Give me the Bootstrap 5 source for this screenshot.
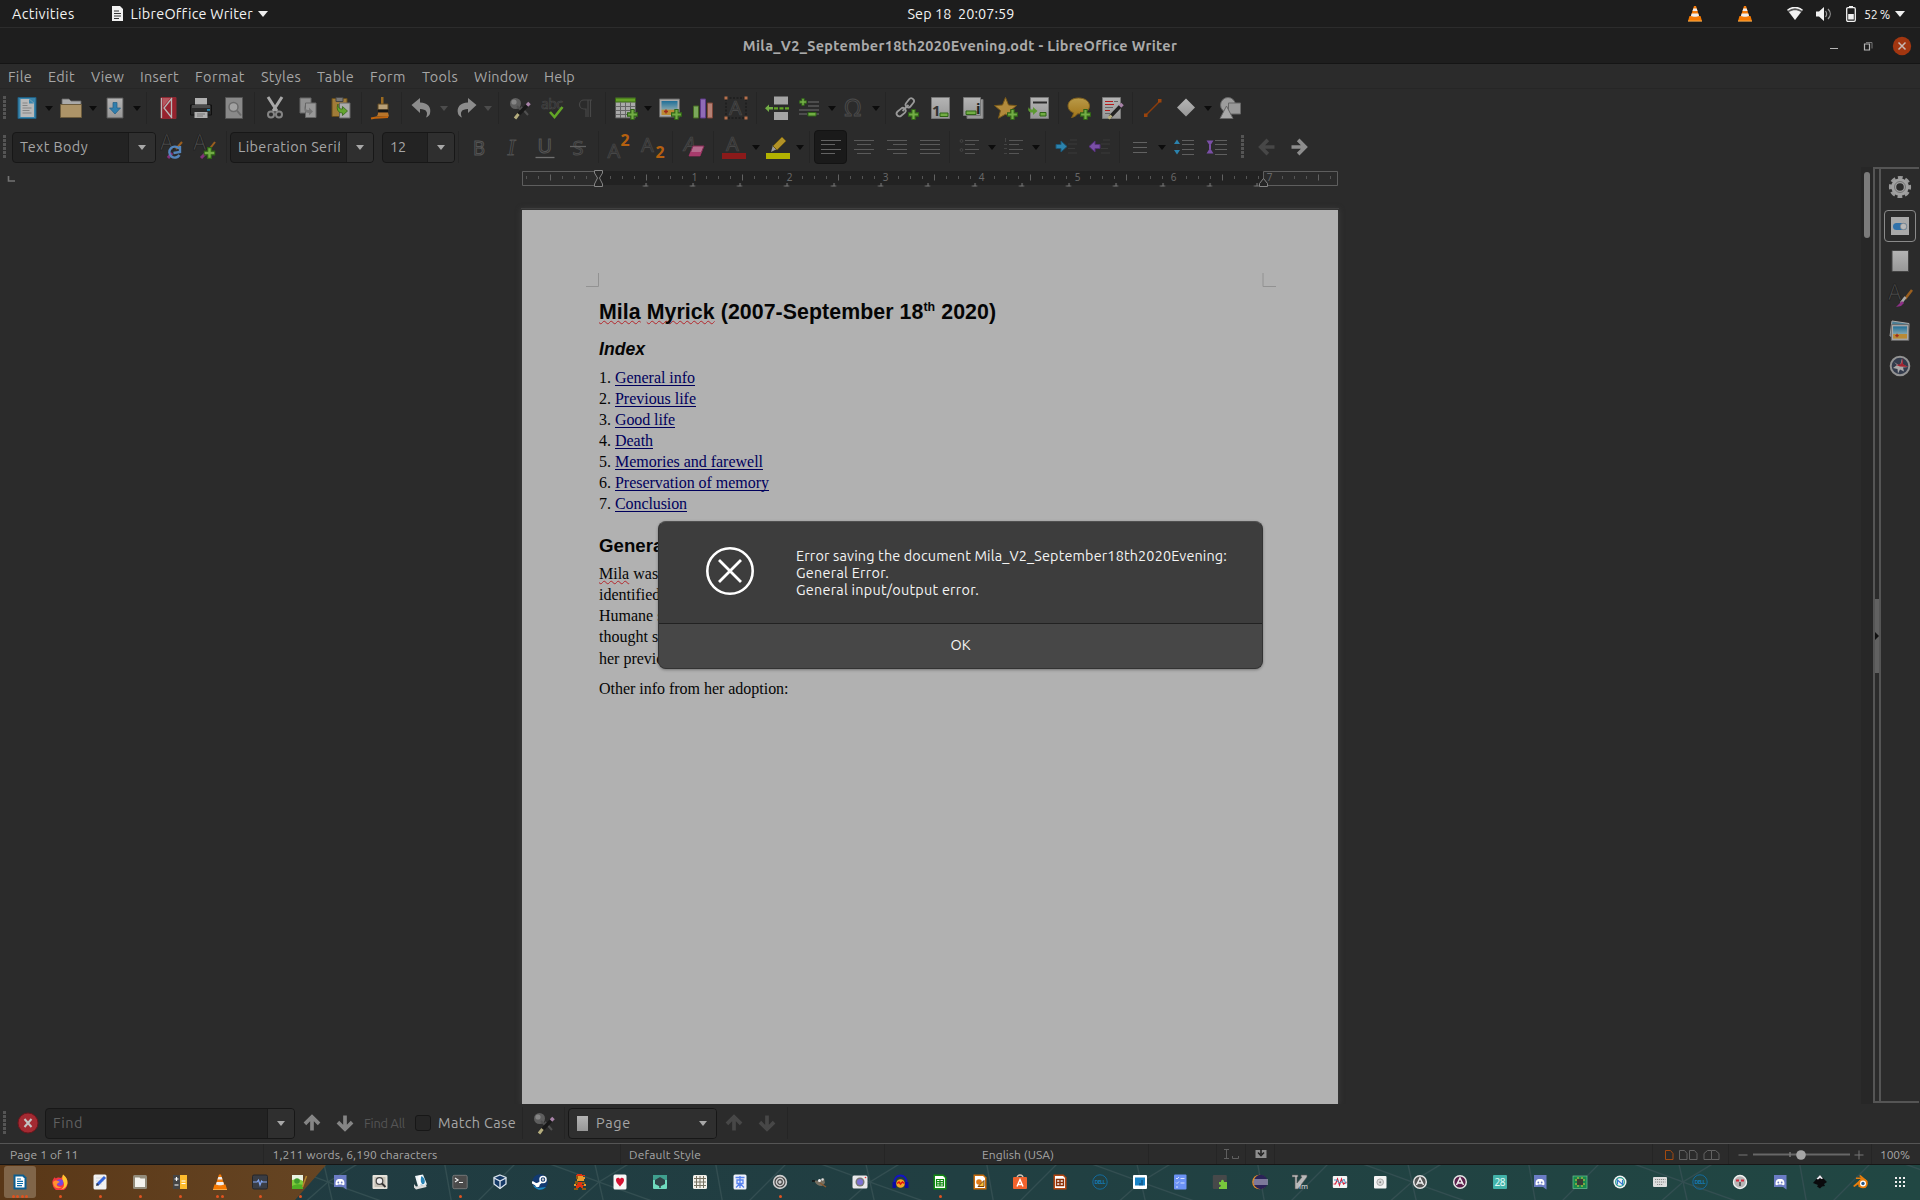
<!DOCTYPE html>
<html lang="en">
<head>
<meta charset="utf-8">
<title>Mila_V2_September18th2020Evening.odt - LibreOffice Writer</title>
<link href="https://cdn.jsdelivr.net/npm/bootstrap@5.3.0/dist/css/bootstrap.min.css" rel="stylesheet">
<style>
body{width:1920px;height:1200px;overflow:hidden;background:#2b2b2b;color:#a6a6a6;font:14.4px/18px Ubuntu,"Noto Sans",sans-serif}
svg{display:block;flex:none}
.fit{display:inline-block;white-space:pre}
.topbar{height:28px;background:#1d1d1d;color:#f2f2f2;border-bottom:1px solid #2c2c2c}
.titlebar{height:36px;background:#1e1e1e;border-bottom:1px solid #151515;color:#aaa;font-weight:700}
.menus{height:25px;border-bottom:1px solid #262626;gap:16px;padding:1px 0 0 8px}
.bar1{height:38px}.bar2{height:40px}
.tb,.ar,.sp{flex:none;display:flex;align-items:center;justify-content:center}
.tb{width:33px;height:34px}
.ar{width:11px}.ar::after,.tri::after{content:"";border:4.5px solid transparent;border-top:5px solid #0c0c0c;border-bottom:0}
.ar.off::after{border-top-color:#4c4c4c}
.tri::after{border-top-color:#a8a8a8}
.sp{width:8px;height:32px}.sp::after{content:"";width:1px;height:32px;background:#252525}
.w7{width:7px}.w9{width:9px}.w10{width:10px}
.grip{flex:none;width:3px;height:24px;background:repeating-linear-gradient(#555 0 3px,transparent 3px 4px)}
.combo{flex:none;height:31px;border:1px solid #171717;border-radius:4px;background:#232323;overflow:hidden}
.combo .txt{flex:1;padding-left:7px;overflow:hidden;white-space:nowrap}
.combo .tri{width:27px;height:100%;background:#2f2f2f;border-left:1px solid #1b1b1b}
.on{background:#1a1a1a;border:1px solid #131313;border-radius:4px}
.main{height:937px}
.canvas{width:1861px;overflow:hidden}
.rulerrow{height:43px}
.paper{width:816px;height:894px;margin-left:522px;background:#b1b1b1;color:#050505;box-shadow:0 0 5px 1px #3c3c3c;font:16px/21.16px "Liberation Serif",serif;padding:63px 0 0 64px}
.marks{width:692px;height:14px}
.txtarea{margin-left:13px}
.paper h1,.paper h2,.paper h3{font-family:"Liberation Sans",sans-serif;font-weight:700;white-space:nowrap}
.paper h1{font-size:21.33px;line-height:24px;margin:13px 0 14px;letter-spacing:.065px}
.paper h1 sup{font-size:12.4px;top:-.62em}
.paper h2{font-size:17.6px;line-height:22px;font-style:italic;margin:0 0 6.500px}
.paper h3{font-size:18.67px;line-height:22px;margin:20.400px 0 6px}
.paper a{color:#00005c;text-decoration:none}
.paper a .fit{text-decoration:underline;text-decoration-thickness:1px;text-underline-offset:2px;text-decoration-skip-ink:none}
.wavy{text-decoration:underline wavy #b3262b 1px;text-underline-offset:1px;text-decoration-skip-ink:none}
.vtrack{width:12px;background:#272727;padding:5px 3px}
.vthumb{width:6px;height:66px;border-radius:3px;background:#7b7b7b}
.side{width:46px;height:936px;border:2px solid #555;border-right:0}
.rail{width:6px;border-right:2px solid #555;padding-top:430px}
.rail div{width:4px;height:74px;background:#616161}
.deck{width:38px}
.deck .tb{height:35px}
.deck .on2{border:1px solid #8a8a8a;border-radius:4px;width:32px;height:32px;margin:6px 0 1px}
.findbar{height:39px;padding-bottom:1px}
.statusbar{height:22px;border-top:1px solid #555;border-bottom:1px solid #161616;font-size:12px;line-height:21px}
.cell{flex:none;height:20px;border-right:1px solid #252525;padding-left:10px;white-space:nowrap}
.dock{height:35px;background:#21403f;position:relative}
.dockbg{position:absolute;inset:0}
.dk{position:relative;width:40px;height:35px;padding-top:9px}
.dk.act::before{content:"";position:absolute;left:4px;top:1px;width:32px;height:32px;border-radius:3px;background:#806549}
.dk svg{position:relative}
.dots{position:absolute;left:0;right:0;top:30px;gap:1.3px}
.dots i{width:3px;height:3px;border-radius:50%;background:#e0521f}
.msg{position:absolute;left:658px;top:521px;width:605px;height:148px;background:#3d3d3d;border:1px solid #333;border-top-color:#505050;border-radius:8px;color:#f4f4f4;font-size:14.4px;line-height:17px;box-shadow:0 1px 3px #0005;overflow:hidden}
.msg .bodyrow{height:101px;padding-left:47px}
.msg .lines{margin:26px 0 0 42px}
.msg .okbtn{height:46px;border:0;border-top:1px solid #222;border-radius:0;background:#474747;color:#f4f4f4;font-size:14.4px}
</style>
<script src="https://cdn.jsdelivr.net/npm/bootstrap@5.3.0/dist/js/bootstrap.bundle.min.js"></script>
</head>
<body class="d-flex flex-column">

<svg width="0" height="0" class="position-absolute">
<defs>
<linearGradient id="gp" x2="0" y2="1"><stop stop-color="#b4b4b4"/><stop offset="1" stop-color="#979797"/></linearGradient>
<linearGradient id="gold" x2="0" y2="1"><stop stop-color="#b99a48"/><stop offset="1" stop-color="#a17418"/></linearGradient>
<linearGradient id="gs" x2="0" y2="1"><stop stop-color="#206f98"/><stop offset=".6" stop-color="#7fa3ad"/><stop offset=".62" stop-color="#b98a35"/></linearGradient>
<symbol id="plus" viewBox="0 0 10 10"><path d="M3.5.5h3v3h3v3h-3v3h-3v-3h-3v-3h3z" fill="#73ad45" stroke="#2f6416"/></symbol>
<symbol id="vlc" viewBox="0 0 16 16"><path d="M2.5 10.5h11l1.5 5H1z" fill="#f57900"/><path d="M1 15.6h14" stroke="#ffb14d"/><path d="M7 .5h2L12.6 12c-2 1.6-7.200 1.600-9.200 0z" fill="#f47b0a"/><path d="M6.300 3h3.400l.8 2.600H5.500zM4.700 8h6.600l.8 2.500c-2 1-6.200 1-8.200 0z" fill="#eee"/></symbol>
<symbol id="aa" viewBox="0 0 24 24"><text x="0" y="17" font-family="Noto Sans" font-size="21" fill="#4c4c4c" stroke="#191919" stroke-width=".7">A</text></symbol>
<symbol id="new" viewBox="0 0 24 24"><path d="M3 1.500h18v21H3z" fill="#3b86ad" stroke="#1f5d80"/><path d="M5.500 3h9l4.500 4v14H5.500z" fill="#b9b9b9"/><path d="M14 3v4.500h5" fill="#3b86ad"/><path d="M7.500 7h5M7.500 9.500h5M7.500 12h9M7.500 14.500h7M7.500 17h9" stroke="#858585"/></symbol>
<symbol id="open" viewBox="0 0 24 24"><path d="M3 3h7l2 2h10v8H3z" fill="#a9a9a9" stroke="#666" stroke-width=".8"/><path d="M1.500 8.500h21v13h-21z" fill="#ad9468" stroke="#6d5c3d"/></symbol>
<symbol id="save" viewBox="0 0 24 24"><path d="M4 2h16v20H4z" fill="url(#gp)" stroke="#555"/><path d="M10 6.500h4V12h3.500L12 18l-5.500-6H10z" fill="#2e7eae" stroke="#215d84" stroke-width=".7"/></symbol>
<symbol id="pdf" viewBox="0 0 24 24"><path d="M5 1.500h15v21H5z" fill="#97212d" stroke="#8b2a33"/><path d="M5.500 2v20M15.500 2v20M16 2L8 12l8 10" stroke="#b7b7b7" fill="none" stroke-width="1.300"/><path d="M6.500 2h8L7 11z" fill="#b5565e"/></symbol>
<symbol id="print" viewBox="0 0 24 24"><path d="M6 2h12v8H6z" fill="#b0b0b0"/><path d="M1.500 9h21v10h-21z" fill="#292929" stroke="#101010"/><path d="M3 9h18v3H3z" fill="#4b4b4b"/><path d="M5.500 16h13v6h-13z" fill="#b0b0b0"/><path d="M8 18h8M8 20h6" stroke="#777"/><path d="M18 13h3v1.800h-3z" fill="#2b8ab4"/></symbol>
<symbol id="prev" viewBox="0 0 24 24"><path d="M3.500 1.500h17v21h-17z" fill="#898989" stroke="#555"/><circle cx="11.500" cy="11" r="4.500" fill="#a2a2a2" stroke="#6b6b6b" stroke-width="1.500"/><path d="M15 14.500l4 5" stroke="#6b6b6b" stroke-width="2"/></symbol>
<symbol id="cut" viewBox="0 0 24 24"><path d="M5 1l9 14M19 1l-9 14" stroke="#a8a8a8" stroke-width="3"/><circle cx="8" cy="18.500" r="3" fill="none" stroke="#858585" stroke-width="2"/><circle cx="16" cy="18.500" r="3" fill="none" stroke="#858585" stroke-width="2"/></symbol>
<symbol id="copy" viewBox="0 0 24 24"><path d="M4 2h11v15H4z" fill="#919191" stroke="#666"/><path d="M9.500 7H20v14.500H9.500z" fill="#989898" stroke="#666"/><path d="M9 9c0 4 1 5 4 5v-2.500l4 4-4 4V17c-4 0-6-3-4-8" fill="#777"/></symbol>
<symbol id="paste" viewBox="0 0 24 24"><path d="M3 2.500h15v18H3z" fill="#a17c38" stroke="#664c1b"/><path d="M7 1.500h7v4H7z" fill="#777" stroke="#444"/><path d="M10.500 7H21v15H10.500z" fill="#aaa" stroke="#666"/><path d="M9 8c0 4 1.500 5 4.500 5v-2.500l5 4.500-5 4.500V17C9 17 7 13 9 8" fill="#63a52f" stroke="#2b5d11" stroke-width=".7"/></symbol>
<symbol id="brush" viewBox="0 0 24 24"><path d="M11 1h2.500v7H11z" fill="#9b6a20"/><path d="M8 8h10v6H8z" fill="#b9a077" stroke="#624a22"/><path d="M8 13.500h10v3H8z" fill="#161616"/><path d="M8 16.500h10l1 4H4c3 0 4-1 4-4" fill="#b9752a"/><path d="M1 22.500c6-1.500 9-.5 17-1.500" stroke="#c0640d" stroke-width="2" fill="none"/></symbol>
<symbol id="undo" viewBox="0 0 24 24"><path d="M1.500 9L10 2v4.500c8 0 11.500 5 10 11-.5 2-2.500 3.500-4 4 2.500-5 .5-8.500-6-8.500v4z" fill="#8c8c8c"/></symbol>
<symbol id="find" viewBox="0 0 24 24"><circle cx="7.500" cy="7.500" r="5.500" fill="#5e5e5e"/><circle cx="6" cy="6" r="2.600" fill="#858585"/><path d="M13 11l7 8M9 10l5 5" stroke="#505050" stroke-width="2"/><path d="M20 8.500L9 20" stroke="#191919" stroke-width="3.500"/><path d="M21.500 7L19 9.500" stroke="#a883a8" stroke-width="3.500"/><path d="M10.500 18L7 22.500" stroke="#b5ad7e" stroke-width="3"/></symbol>
<symbol id="spell" viewBox="0 0 24 24"><text x="0" y="13" font-family="Noto Sans" font-size="14" fill="#292929" stroke="#4b4b4b" stroke-width=".6" textLength="22">abc</text><path d="M9 16l4.500 5L21.500 11" fill="none" stroke="#62a526" stroke-width="2.600"/></symbol>
<symbol id="pil" viewBox="0 0 24 24"><path d="M18 4H10a4.500 4.500 0 000 9h2v8M16.500 4v17M14 4v17" fill="none" stroke="#474747" stroke-width="1.200"/></symbol>
<symbol id="table" viewBox="0 0 24 24"><path d="M1.500 2h20v20h-20z" fill="#a9a9a9" stroke="#555"/><path d="M1.500 2h20v4h-20z" fill="#65a128" stroke="#386514"/><path d="M2 10.500h19M2 14.500h19M2 18.500h19M6.500 6v16M11.500 6v16M16.500 6v16" stroke="#656565"/><use href="#plus" x="13" y="13" width="11" height="11"/></symbol>
<symbol id="img" viewBox="0 0 24 24"><path d="M1.500 3h20v18h-20z" fill="#aaa" stroke="#666"/><path d="M3.500 5h16v14h-16z" fill="url(#gs)"/><path d="M6 15.500h4M8 13.500v4" stroke="#9e2b1b" stroke-width="1.500"/></symbol>
<symbol id="imgp" viewBox="0 0 24 24"><use href="#img"/><use href="#plus" x="13" y="13" width="11" height="11"/></symbol>
<symbol id="chart" viewBox="0 0 24 24"><path d="M2.500 10h5v12h-5z" fill="#7ba85b" stroke="#456a22"/><path d="M9.500 3h5v19h-5z" fill="#8f6bb7" stroke="#5f3b88"/><path d="M16.500 7h5v15h-5z" fill="#b58074" stroke="#7e4638"/></symbol>
<symbol id="tbox" viewBox="0 0 24 24"><path d="M2 2h20v20H2z" fill="none" stroke="#161616" stroke-dasharray="2 1.500"/><text x="5" y="19" font-family="Noto Sans" font-size="20" fill="#333" stroke="#4d4d4d" stroke-width=".6">A</text><path d="M.5.500h3v3h-3zM20.500.500h3v3h-3zM.5 20.500h3v3h-3zM20.500 20.500h3v3h-3z" fill="#b6704d"/></symbol>
<symbol id="pbrk" viewBox="0 0 24 24"><path d="M9 .5h14v8H9zM9 16h14v8H9z" fill="#a4a4a4"/><path d="M9 12.300h15" stroke="#62a526" stroke-width="2.200" stroke-dasharray="4 1.500"/><path d="M0 12.300l4-3.800V11h4v2.600H4v2.500z" fill="#72ad45"/></symbol>
<symbol id="field" viewBox="0 0 24 24"><path d="M10 6h11M10 10h11M1 14h20M1 18h8M18 18h3" stroke="#5a5a5a" stroke-width="1.300"/><use href="#plus" x="1" y="2" width="8" height="8"/><path d="M10 16.500h8v3.500h-8z" fill="#72ad45" stroke="#2f6416"/></symbol>
<symbol id="omega" viewBox="0 0 24 24"><text x="2.500" y="20" font-family="Noto Sans" font-size="23" fill="#2e2e2e" stroke="#4c4c4c" stroke-width=".9">Ω</text></symbol>
<symbol id="link" viewBox="0 0 24 24"><g fill="none" stroke="#999" stroke-width="1.800"><rect x="10" y="4" width="10" height="5.500" rx="2.700" transform="rotate(-52 15 7)"/><rect x="1" y="13.500" width="10" height="5.500" rx="2.700" transform="rotate(-40 6 16)"/><path d="M7.500 15l6-6"/></g><use href="#plus" x="13" y="13" width="11" height="11"/></symbol>
<symbol id="foot" viewBox="0 0 24 24"><path d="M3.500 1.500h18v21h-18z" fill="url(#gp)" stroke="#777"/><text x="4" y="20" font-size="15" font-family="Noto Sans" font-weight="700" fill="#333">1</text><path d="M12 17h8v3.500h-8z" fill="#72ad45" stroke="#2f6416"/></symbol>
<symbol id="endn" viewBox="0 0 24 24"><path d="M6 3.500h16v19H6z" fill="#999" stroke="#777"/><path d="M2.500 1.500h17v18h-17z" fill="url(#gp)" stroke="#777"/><text x="15" y="18" font-size="15" font-family="Noto Sans" font-weight="700" fill="#222">i</text><path d="M5 15h10v3.500H5z" fill="#72ad45" stroke="#2f6416"/></symbol>
<symbol id="star" viewBox="0 0 24 24"><path d="M11.500 1.500l3 7.500 8 .6-6 5 2 7.600-7-4-7 4 2-7.600-6-5 8-.6z" fill="#b18a3c" stroke="#7a5a18"/><use href="#plus" x="13" y="13" width="11" height="11"/></symbol>
<symbol id="xref" viewBox="0 0 24 24"><path d="M3.500 1.500h18v21h-18z" fill="url(#gp)" stroke="#777"/><path d="M6 6.500h14" stroke="#2b2b2b" stroke-width="2"/><path d="M2 11c0 2 1 2.500 4 2.500V11l4.500 4L6 19v-2.500c-4 0-6-2-4-5.500" fill="#5c9a31"/><path d="M13 16.500h6V20h-6z" fill="#72ad45" stroke="#2f6416"/></symbol>
<symbol id="comm" viewBox="0 0 24 24"><path d="M11.500 2C5 2 1 5.500 1 10c0 3.500 2.500 5.500 5.500 6.800-.2 2-1.200 3.700-2 4.700 3-.5 5-2 6-3.700C17.500 18 22.500 15 22.500 10S17.500 2 11.500 2z" fill="url(#gold)" stroke="#80601d"/><use href="#plus" x="13" y="13" width="11" height="11"/></symbol>
<symbol id="track" viewBox="0 0 24 24"><path d="M2.500 1.500h18v21h-18z" fill="url(#gp)" stroke="#777"/><path d="M5 5.500h8M5 8.500h9M5 14.500h5" stroke="#b51a1a" stroke-width="1.200"/><path d="M14 5.500h4M5 11.500h8M5 17.500h5" stroke="#666"/><path d="M20.500 10L10 21" stroke="#222" stroke-width="3.500"/><path d="M22.500 8L20 10.500" stroke="#a883a8" stroke-width="3.500"/><path d="M11.500 19.500L8.500 22.500" stroke="#b5ad7e" stroke-width="3"/></symbol>
<symbol id="line" viewBox="0 0 24 24"><path d="M5 19L19 5" stroke="#8b3d0c" stroke-width="1.400"/><path d="M3 17.500h3.500V21H3zM17 3h3.500v3.500H17z" fill="#9b440c"/></symbol>
<symbol id="dia" viewBox="0 0 24 24"><path d="M12 2.500l9 9-9 9-9-9z" fill="url(#gp)"/></symbol>
<symbol id="shapes" viewBox="0 0 24 24"><circle cx="10" cy="9" r="7.500" fill="#9c9c9c" stroke="#666"/><path d="M10.500 7h12v11h-12z" fill="#999" stroke="#666"/><path d="M8.500 10L15 22.500H2z" fill="#a8a8a8" stroke="#666"/></symbol>
<symbol id="aref" viewBox="0 0 26 26"><use href="#aa" width="24" height="24" x="0" y="-1"/><path d="M22 8L16 15" stroke="#9b5f1e" stroke-width="2"/><path d="M12 19L8 24" stroke="#85307c" stroke-width="3"/><path d="M19 14.500a5.500 5.500 0 10.500 6.500M13.500 19l6.500-1v-6" fill="none" stroke="#5485bb" stroke-width="2.400"/></symbol>
<symbol id="aplus" viewBox="0 0 26 26"><use href="#aa" width="24" height="24" x="0" y="-1"/><path d="M22 8L15 17" stroke="#9b5f1e" stroke-width="2"/><path d="M13 19L8 24" stroke="#85307c" stroke-width="3"/><use href="#plus" x="10.500" y="13" width="12" height="12"/></symbol>
<symbol id="abr" viewBox="0 0 26 26"><use href="#aa" width="24" height="24" x="1"/><path d="M25 7L18 16" stroke="#9b5f1e" stroke-width="2.600"/><path d="M18.500 14L14 20" stroke="#aaa" stroke-width="2.600"/><path d="M15 18L9 24l5-1 3-3z" fill="#8d2f87"/></symbol>
<symbol id="sup" viewBox="0 0 26 26"><text x="1.500" y="24" font-family="Noto Sans" font-size="20" fill="#333" stroke="#4d4d4d" stroke-width=".6">A</text><text x="14.500" y="12" font-family="Noto Sans" font-weight="700" font-size="16" fill="#b5600f">2</text></symbol>
<symbol id="sub" viewBox="0 0 26 26"><text x="2" y="18" font-family="Noto Sans" font-size="20" fill="#333" stroke="#4d4d4d" stroke-width=".6">A</text><text x="16.500" y="24" font-family="Noto Sans" font-weight="700" font-size="16" fill="#b5600f">2</text></symbol>
<symbol id="erase" viewBox="0 0 26 26"><text x="3" y="17" font-family="Noto Sans" font-size="20" fill="#333" stroke="#4d4d4d" stroke-width=".6" font-style="italic">A</text><path d="M12 12h11l-4 10H8z" fill="#b56b8d" stroke="#872a55"/><path d="M9.500 18h11l-1.500 4H8z" fill="#a83b6c"/></symbol>
<symbol id="fcol" viewBox="0 0 26 26"><text x="5" y="17" font-family="Noto Sans" font-size="20" fill="#333" stroke="#4d4d4d" stroke-width=".6">A</text><path d="M1 19h24v6H1z" fill="#8b1a1a"/></symbol>
<symbol id="high" viewBox="0 0 26 26"><path d="M6 18l2-7 4 4z" fill="#999"/><path d="M8 12L17 3l4 4-9 9z" fill="#b29227" stroke="#6f5a12"/><path d="M1 19h24v6H1z" fill="#b2b200"/></symbol>
<symbol id="al" viewBox="0 0 24 24"><path d="M2 5.500h20M2 9.500h14M2 14.500h20M2 18.500h14" stroke="#626262" stroke-width="1.200"/></symbol>
<symbol id="ac" viewBox="0 0 24 24"><path d="M2 5.500h20M5 9.500h14M2 14.500h20M5 18.500h14" stroke="#5a5a5a" stroke-width="1.200"/></symbol>
<symbol id="arr" viewBox="0 0 24 24"><path d="M2 5.500h20M8 9.500h14M2 14.500h20M8 18.500h14" stroke="#5a5a5a" stroke-width="1.200"/></symbol>
<symbol id="aj" viewBox="0 0 24 24"><path d="M2 5.500h20M2 9.500h20M2 14.500h20M2 18.500h20" stroke="#5a5a5a" stroke-width="1.200"/></symbol>
<symbol id="bul" viewBox="0 0 24 24"><path d="M7 5.500h14M7 9.500h10M7 14.500h14M7 18.500h10" stroke="#555"/><circle cx="3.500" cy="6" r="1.400" fill="none" stroke="#444"/><circle cx="3.500" cy="15" r="1.400" fill="none" stroke="#444"/></symbol>
<symbol id="num" viewBox="0 0 24 24"><path d="M7 5.500h14M7 9.500h10M7 14.500h14M7 18.500h10" stroke="#555"/><path d="M3.500 3v4M2 9.500h3M2 13.500h3M2 18.500h3" stroke="#444"/></symbol>
<symbol id="ind" viewBox="0 0 24 24"><path d="M15 5h7M13 9h9M13 13.500h7M13 18h9" stroke="#3a3a3a" stroke-width="1.200"/><path d="M1 9.500h5V6l6 5.500-6 5.500v-3.500H1z" fill="#2b83ae" stroke="#1c5878"/></symbol>
<symbol id="outd" viewBox="0 0 24 24"><path d="M15 5h7M13 9h9M13 13.500h7M13 18h9" stroke="#3a3a3a" stroke-width="1.200"/><path d="M12 9.500H7V6l-6 5.500L7 17v-3.500h5z" fill="#7a4fa6" stroke="#56307c"/></symbol>
<symbol id="lsp" viewBox="0 0 24 24"><path d="M5 7.500h14M5 12.500h14M5 17.500h14" stroke="#626262" stroke-width="1.200"/></symbol>
<symbol id="inc" viewBox="0 0 24 24"><path d="M10 5.500h12M10 9.500h12M10 14.500h12M10 19.500h12" stroke="#5f5f5f"/><path d="M5 4.500L8 9H2zM5 19.500L8 15H2z" fill="#2b83ae"/><path d="M5 10v4" stroke="#333"/></symbol>
<symbol id="dec" viewBox="0 0 24 24"><path d="M10 5.500h12M10 9.500h12M10 14.500h12M10 19.500h12" stroke="#5f5f5f"/><path d="M1.500 5.500h7L5 11zM1.500 18.500h7L5 13z" fill="#7a4fa6"/><path d="M5 10v4" stroke="#7a4fa6" stroke-width="2"/></symbol>
<symbol id="ra" viewBox="0 0 24 24"><path d="M3 12h16M11 3.500L19.500 12 11 20.500" fill="none" stroke="currentColor" stroke-width="4.400"/></symbol>
<symbol id="gear" viewBox="0 0 24 24"><circle cx="12" cy="12" r="9.300" fill="none" stroke="#9a9a9a" stroke-width="3.600" stroke-dasharray="4.600 2.704" stroke-dashoffset="2.300"/><circle cx="12" cy="12" r="6.300" fill="none" stroke="#a0a0a0" stroke-width="5"/><circle cx="12" cy="12" r="5.500" fill="none" stroke="#727272"/></symbol>
<symbol id="prop" viewBox="0 0 24 24"><path d="M3 3h18v18H3z" fill="#a9a9a9"/><rect x="5" y="9" width="14" height="7" rx="3.500" fill="#3071a9"/><circle cx="15.500" cy="12.500" r="3.200" fill="#b9b9b9" stroke="#777" stroke-width=".6"/></symbol>
<symbol id="pg" viewBox="0 0 24 24"><path d="M4 1.500h16.500v21H4z" fill="url(#gp)" stroke="#444"/></symbol>
<symbol id="gal" viewBox="0 0 24 24"><path d="M4 2l17 2.500-1 15L2 17z" fill="#4a7c92" stroke="#aaa"/><use href="#img" x="2" y="3" width="21" height="21"/></symbol>
<symbol id="nav" viewBox="0 0 24 24"><circle cx="12" cy="12" r="9.300" fill="#333b4c" stroke="#939393" stroke-width="2"/><path d="M12 12L14 4.500l1 6 5 2.500-5 .5 1 4-4-2-2 4-.5-4.500L5 14l4-3-3-3z" fill="#aaa"/><path d="M8 11l5-1 1.500-6L15 10l5 3-8-.5z" fill="#a32330"/></symbol>

<symbol id="dc" viewBox="0 0 16 16"><path d="M2 1h12.500v14.500L11 13H2z" fill="#6b7cc4"/><path d="M3.500 10.500c0-4 1-5 3-5.500h3c2 .5 3 1.500 3 5.500-1 1-2 1-2.500 0H6c-.5 1-1.500 1-2.500 0z" fill="#fff"/><circle cx="6.300" cy="8.500" r=".9" fill="#6b7cc4"/><circle cx="9.700" cy="8.500" r=".9" fill="#6b7cc4"/></symbol>
<symbol id="dell" viewBox="0 0 16 16"><circle cx="8" cy="8" r="7.200" fill="none" stroke="#146a9c" stroke-width="1"/><text x="2.500" y="10" font-family="Noto Sans" font-weight="700" font-size="5.500" fill="#1577ad" textLength="11">DELL</text></symbol>
<symbol id="acirc" viewBox="0 0 16 16"><circle cx="8" cy="8" r="6.300" fill="currentColor" stroke="#e4e4e4" stroke-width="1.500"/><path d="M4.500 11L8 4l3.500 7M5.500 9h5" fill="none" stroke="#eee" stroke-width="1.500"/></symbol>
</defs>
</svg>

<header class="topbar d-flex align-items-center flex-shrink-0 position-relative">
  <span class="fit" data-w="62.5" style="margin-left:12px">Activities</span>
  <svg width="13" height="17" viewBox="0 0 13 17" style="margin-left:36px"><path d="M1 1h8l3 3v12H1z" fill="#f1f1f1"/><path d="M3 6h5M3 8.500h7M3 11h7M3 13.500h5" stroke="#333"/></svg>
  <span class="fit" data-w="122" style="margin-left:7px">LibreOffice Writer</span>
  <svg width="10" height="6" viewBox="0 0 10 6" style="margin-left:5px"><path d="M0 0h10L5 6z" fill="#eee"/></svg>
  <div class="position-absolute w-100 text-center" style="left:1px"><span class="fit" data-w="107">Sep 18  20:07:59</span></div>
  <div class="ms-auto d-flex align-items-center" style="padding-right:15px">
    <svg width="16" height="17" style="margin-right:34px"><use href="#vlc"/></svg>
    <svg width="16" height="17" style="margin-right:34px"><use href="#vlc"/></svg>
    <svg width="16" height="13" viewBox="0 0 16 13" style="margin-right:13px"><path d="M0 3.200C5-1 11-1 16 3.200L8 13z" fill="#555"/><path d="M.5 3.200C5-.5 11-.5 15.500 3.200" fill="none" stroke="#f1f1f1" stroke-width="1.400"/><path d="M2 5C6 2.500 10 2.500 14 5L8 13z" fill="#f1f1f1"/></svg>
    <svg width="16" height="14" viewBox="0 0 16 14" style="margin-right:14px"><path d="M0 4.500h3L8 0v14L3 9.500H0z" fill="#f1f1f1"/><path d="M9.500 4c1.500 2 1.500 4 0 6M12 2c3 3 3 7 0 10" fill="none" stroke="#999" stroke-width="1.200"/></svg>
    <svg width="10" height="16" viewBox="0 0 10 16" style="margin-right:8px"><rect x=".7" y="1.700" width="8.600" height="13.600" rx="1.200" fill="none" stroke="#f1f1f1" stroke-width="1.300"/><path d="M3 0h4v2H3zM2.200 8h5.600v5.500H2.200z" fill="#f1f1f1"/></svg>
    <span class="fit" data-w="26" style="font-size:12.500px">52 %</span>
    <svg width="10" height="6" viewBox="0 0 10 6" style="margin-left:5px"><path d="M0 0h10L5 6z" fill="#eee"/></svg>
  </div>
</header>

<div class="titlebar d-flex align-items-center flex-shrink-0 position-relative">
  <div class="w-100 text-center"><span class="fit" data-w="434">Mila_V2_September18th2020Evening.odt - LibreOffice Writer</span></div>
  <div class="position-absolute end-0 d-flex align-items-center" style="padding-right:8px">
    <svg width="90" height="20" viewBox="0 0 90 20"><path d="M8 12.500h8" stroke="#b5b5b5"/><path d="M42.500 8h5v6h-5z" fill="none" stroke="#b5b5b5" stroke-width="1.200"/><path d="M44 6.500h6v6" fill="none" stroke="#777"/><circle cx="80" cy="10" r="9.200" fill="#a23610"/><path d="M76.500 6.500l7 7M83.500 6.500l-7 7" stroke="#c9b9b3" stroke-width="1.500"/></svg>
  </div>
</div>

<nav class="menus d-flex align-items-center flex-shrink-0">
  <span class="fit" data-w="24">File</span><span class="fit" data-w="27">Edit</span><span class="fit" data-w="33">View</span><span class="fit" data-w="39">Insert</span><span class="fit" data-w="50">Format</span><span class="fit" data-w="40">Styles</span><span class="fit" data-w="37">Table</span><span class="fit" data-w="36">Form</span><span class="fit" data-w="36">Tools</span><span class="fit" data-w="54">Window</span><span class="fit" data-w="31">Help</span>
</nav>

<div class="bar1 d-flex align-items-center flex-shrink-0" style="padding-left:3px">
  <span class="grip" style="margin-right:4px"></span>
  <span class="tb"><svg width="24" height="24"><use href="#new"/></svg></span><span class="ar"></span>
  <span class="tb"><svg width="24" height="24"><use href="#open"/></svg></span><span class="ar"></span>
  <span class="tb"><svg width="24" height="24"><use href="#save"/></svg></span><span class="ar"></span><span class="sp w9"></span>
  <span class="tb"><svg width="24" height="24"><use href="#pdf"/></svg></span>
  <span class="tb"><svg width="24" height="24"><use href="#print"/></svg></span>
  <span class="tb"><svg width="24" height="24"><use href="#prev"/></svg></span><span class="sp"></span>
  <span class="tb"><svg width="24" height="24"><use href="#cut"/></svg></span>
  <span class="tb"><svg width="24" height="24"><use href="#copy"/></svg></span>
  <span class="tb"><svg width="24" height="24"><use href="#paste"/></svg></span><span class="sp"></span>
  <span class="tb"><svg width="24" height="24"><use href="#brush"/></svg></span><span class="sp w7"></span>
  <span class="tb"><svg width="24" height="24"><use href="#undo"/></svg></span><span class="ar off"></span>
  <span class="tb"><svg width="24" height="24" style="transform:scaleX(-1)"><use href="#undo"/></svg></span><span class="ar off"></span><span class="sp w10"></span>
  <span class="tb"><svg width="24" height="24"><use href="#find"/></svg></span>
  <span class="tb"><svg width="24" height="24"><use href="#spell"/></svg></span>
  <span class="tb"><svg width="24" height="24"><use href="#pil"/></svg></span><span class="sp w7"></span>
  <span class="tb"><svg width="24" height="24"><use href="#table"/></svg></span><span class="ar"></span>
  <span class="tb"><svg width="24" height="24"><use href="#imgp"/></svg></span>
  <span class="tb"><svg width="24" height="24"><use href="#chart"/></svg></span>
  <span class="tb"><svg width="24" height="24"><use href="#tbox"/></svg></span><span class="sp"></span>
  <span class="tb"><svg width="24" height="24"><use href="#pbrk"/></svg></span>
  <span class="tb"><svg width="24" height="24"><use href="#field"/></svg></span><span class="ar"></span>
  <span class="tb"><svg width="24" height="24"><use href="#omega"/></svg></span><span class="ar"></span><span class="sp w9"></span>
  <span class="tb"><svg width="24" height="24"><use href="#link"/></svg></span>
  <span class="tb"><svg width="24" height="24"><use href="#foot"/></svg></span>
  <span class="tb"><svg width="24" height="24"><use href="#endn"/></svg></span>
  <span class="tb"><svg width="24" height="24"><use href="#star"/></svg></span>
  <span class="tb"><svg width="24" height="24"><use href="#xref"/></svg></span><span class="sp w7"></span>
  <span class="tb"><svg width="24" height="24"><use href="#comm"/></svg></span>
  <span class="tb"><svg width="24" height="24"><use href="#track"/></svg></span><span class="sp"></span>
  <span class="tb"><svg width="24" height="24"><use href="#line"/></svg></span>
  <span class="tb"><svg width="24" height="24"><use href="#dia"/></svg></span><span class="ar"></span>
  <span class="tb"><svg width="24" height="24"><use href="#shapes"/></svg></span>
</div>

<div class="bar2 d-flex align-items-center flex-shrink-0" style="padding-left:3px">
  <span class="grip" style="margin-right:6px"></span>
  <div class="combo d-flex align-items-center" style="width:144px"><span class="txt"><span class="fit" data-w="68">Text Body</span></span><span class="tri d-flex align-items-center justify-content-center"></span></div>
  <span class="tb"><svg width="26" height="26"><use href="#aref"/></svg></span>
  <span class="tb"><svg width="26" height="26"><use href="#aplus"/></svg></span><span class="sp"></span>
  <div class="combo d-flex align-items-center" style="width:144px"><span class="txt" style="flex:none;width:109px"><span class="fit" data-w="105">Liberation Serif</span></span><span class="flex-fill"></span><span class="tri d-flex align-items-center justify-content-center"></span></div>
  <div class="combo d-flex align-items-center" style="width:73px;margin-left:8px"><span class="txt"><span class="fit" data-w="16">12</span></span><span class="tri d-flex align-items-center justify-content-center"></span></div><span class="sp w7"></span>
  <span class="tb"><svg width="26" height="26" viewBox="0 0 26 26"><text x="7" y="21" font-family="Noto Sans" font-size="20" fill="#2b2b2b" stroke="#555" textLength="12" lengthAdjust="spacingAndGlyphs">B</text></svg></span>
  <span class="tb"><svg width="26" height="26" viewBox="0 0 26 26"><text x="8.500" y="21" font-family="Liberation Serif" font-style="italic" font-size="23" fill="#2b2b2b" stroke="#505050" stroke-width=".8">I</text></svg></span>
  <span class="tb"><svg width="26" height="26" viewBox="0 0 26 26"><text x="5.500" y="19" font-family="Noto Sans" font-size="20" fill="#2b2b2b" stroke="#555">U</text><path d="M3.500 23.500h19" stroke="#707070" stroke-width="1.300"/></svg></span>
  <span class="tb"><svg width="26" height="26" viewBox="0 0 26 26"><text x="7.500" y="21" font-family="Noto Sans" font-size="20" fill="#2b2b2b" stroke="#4a4a4a">S</text><path d="M5 12.500h16" stroke="#606060" stroke-width="1.300"/></svg></span><span class="sp"></span>
  <span class="tb"><svg width="26" height="26"><use href="#sup"/></svg></span>
  <span class="tb"><svg width="26" height="26"><use href="#sub"/></svg></span><span class="sp w9"></span>
  <span class="tb"><svg width="26" height="26"><use href="#erase"/></svg></span><span class="sp w7"></span>
  <span class="tb"><svg width="26" height="26"><use href="#fcol"/></svg></span><span class="ar"></span>
  <span class="tb"><svg width="26" height="26"><use href="#high"/></svg></span><span class="ar"></span><span class="sp w9"></span>
  <span class="tb on"><svg width="24" height="24"><use href="#al"/></svg></span>
  <span class="tb"><svg width="24" height="24"><use href="#ac"/></svg></span>
  <span class="tb"><svg width="24" height="24"><use href="#arr"/></svg></span>
  <span class="tb"><svg width="24" height="24"><use href="#aj"/></svg></span><span class="sp w7"></span>
  <span class="tb"><svg width="24" height="24"><use href="#bul"/></svg></span><span class="ar"></span>
  <span class="tb"><svg width="24" height="24"><use href="#num"/></svg></span><span class="ar"></span><span class="sp w9"></span>
  <span class="tb"><svg width="24" height="24"><use href="#ind"/></svg></span>
  <span class="tb"><svg width="24" height="24"><use href="#outd"/></svg></span><span class="sp w7"></span>
  <span class="tb"><svg width="24" height="24"><use href="#lsp"/></svg></span><span class="ar"></span>
  <span class="tb"><svg width="24" height="24"><use href="#inc"/></svg></span>
  <span class="tb"><svg width="24" height="24"><use href="#dec"/></svg></span>
  <span class="grip" style="margin:0 6.500px 0 8px"></span>
  <span class="tb" style="color:#474747"><svg width="20" height="20" style="transform:scaleX(-1)"><use href="#ra"/></svg></span>
  <span class="tb" style="width:31px;color:#8d8d8d"><svg width="20" height="20"><use href="#ra"/></svg></span>
</div>

<main class="main d-flex flex-shrink-0">
  <div class="canvas">
    <div class="rulerrow">
      <svg width="1861" height="43" viewBox="0 167 1861 43">
        <defs><pattern id="tk" x="598" y="170" width="96" height="15" patternUnits="userSpaceOnUse"><path d="M12.500 6v3M24.500 6v3M36.500 6v3M60.500 6v3M72.500 6v3M84.500 6v3" stroke="#555"/><path d="M48.500 4.500v6" stroke="#626262"/></pattern>
        <pattern id="tabs" x="598.5" y="183" width="47" height="4" patternUnits="userSpaceOnUse"><path d="M0 3h2.500M44.500 3H47M.5 0v3" stroke="#777" stroke-width="1.200"/></pattern></defs>
        <path d="M8.500 176v5h6.500" fill="none" stroke="#737373" stroke-width="1.600"/>
        <path d="M598 171h666v14H598z" fill="#222"/>
        <path d="M522.500 171.500H598v14H522.500zM1263.500 171.500h74v14h-74z" fill="none" stroke="#5e5e5e"/>
        <path d="M525 171h811v14H525z" fill="url(#tk)"/>
        <path d="M640 183h620v4H640z" fill="url(#tabs)"/>
        <g font-family="Noto Sans" font-size="10" fill="#686868" text-anchor="middle"><text x="694.500" y="181">1</text><text x="789.500" y="181">2</text><text x="885.500" y="181">3</text><text x="981.500" y="181">4</text><text x="1077.500" y="181">5</text><text x="1173.500" y="181">6</text><text x="1269.500" y="181">7</text></g>
        <path d="M594.500 170.500h8v2.500l-3 5 3 6v2.500h-8v-2.500l3-6-3-5zM1259.500 186.500v-3l4-5 4 5v3z" fill="#252525" stroke="#858585"/>
        <path d="M521 208.500h818" stroke="#3f3f3f"/>
      </svg>
    </div>
    <article class="paper">
      <svg class="marks" viewBox="0 0 692 14"><path d="M12.500 0v13.500H-1M677 0v13.500h13" fill="none" stroke="#929292"/></svg>
      <div class="txtarea">
        <h1><span class="wavy">Mila</span> <span class="wavy">Myrick</span> (2007-September 18<sup>th</sup> 2020)</h1>
        <h2>Index</h2>
        <div>1. <a href="#g"><span class="fit" data-w="80">General info</span></a></div>
        <div>2. <a href="#g"><span class="fit" data-w="81">Previous life</span></a></div>
        <div>3. <a href="#g"><span class="fit" data-w="60">Good life</span></a></div>
        <div>4. <a href="#g"><span class="fit" data-w="38">Death</span></a></div>
        <div>5. <a href="#g"><span class="fit" data-w="148">Memories and farewell</span></a></div>
        <div>6. <a href="#g"><span class="fit" data-w="154">Preservation of memory</span></a></div>
        <div>7. <a href="#g"><span class="fit" data-w="72">Conclusion</span></a></div>
        <h3 id="g">General</h3>
        <div><span class="wavy">Mila</span> was</div>
        <div>identified</div>
        <div>Humane s</div>
        <div>thought s</div>
        <div>her previo</div>
        <div style="margin-top:9px"><span class="fit" data-w="189.5">Other info from her adoption:</span></div>
      </div>
    </article>
  </div>
  <div class="vtrack"><div class="vthumb"></div></div>
  <aside class="side d-flex">
    <div class="rail"><div><svg width="4" height="74" viewBox="0 0 4 74"><path d="M0 33l4 4-4 4z" fill="#111"/></svg></div></div>
    <div class="deck d-flex flex-column align-items-center">
      <span class="tb"><svg width="24" height="24"><use href="#gear"/></svg></span>
      <span class="tb on2"><svg width="24" height="24"><use href="#prop"/></svg></span>
      <span class="tb"><svg width="24" height="24"><use href="#pg"/></svg></span>
      <span class="tb"><svg width="26" height="26"><use href="#abr"/></svg></span>
      <span class="tb"><svg width="24" height="24"><use href="#gal"/></svg></span>
      <span class="tb"><svg width="24" height="24"><use href="#nav"/></svg></span>
    </div>
  </aside>
</main>

<div class="findbar d-flex align-items-center flex-shrink-0" style="padding-left:3px">
  <span class="grip"></span>
  <svg width="22" height="22" viewBox="0 0 22 22" style="margin:0 6px 0 11px"><circle cx="11" cy="11" r="10" fill="#a32a32" stroke="#6e151c"/><path d="M7.500 7l7 8M14.500 7l-7 8" stroke="#c4c4c4" stroke-width="2"/></svg>
  <div class="combo d-flex align-items-center" style="width:250px"><span class="txt" style="color:#606060"><span class="fit" data-w="30">Find</span></span><span class="tri d-flex align-items-center justify-content-center"></span></div>
  <span class="tb" style="color:#858585"><svg width="20" height="20" style="transform:rotate(-90deg)"><use href="#ra"/></svg></span>
  <span class="tb" style="color:#858585"><svg width="20" height="20" style="transform:rotate(90deg)"><use href="#ra"/></svg></span>
  <span class="fit" data-w="41" style="margin-left:3px;color:#555;font-size:12.800px">Find All</span>
  <span style="width:16px;height:16px;border:1px solid #171717;border-radius:3px;background:#262626;margin:0 7px 0 10px"></span>
  <span class="fit" data-w="78">Match Case</span>
  <span class="sp" style="margin:0 1px 0 2px"></span>
  <span class="tb"><svg width="24" height="24"><use href="#find"/></svg></span><span class="sp"></span>
  <div class="combo d-flex align-items-center" style="width:149px;background:#2f2f2f"><svg width="11" height="15" style="margin-left:8px"><path d="M0 0h11v15H0z" fill="url(#gp)"/></svg><span class="txt" style="padding-left:8px"><span class="fit" data-w="35">Page</span></span><span class="tri d-flex align-items-center justify-content-center" style="border:0"></span></div>
  <span class="tb" style="color:#474747"><svg width="20" height="20" style="transform:rotate(-90deg)"><use href="#ra"/></svg></span>
  <span class="tb" style="color:#474747"><svg width="20" height="20" style="transform:rotate(90deg)"><use href="#ra"/></svg></span><span class="sp"></span>
</div>

<footer class="statusbar d-flex flex-shrink-0">
  <div class="cell" style="width:264px"><span class="fit" data-w="68.5">Page 1 of 11</span></div>
  <div class="cell" style="width:357px;padding-left:8.500px"><span class="fit" data-w="165">1,211 words, 6,190 characters</span></div>
  <div class="cell" style="width:264px;padding-left:8px"><span class="fit" data-w="72">Default Style</span></div>
  <div class="cell" style="width:264px;padding-left:97px"><span class="fit" data-w="72">English (USA)</span></div>
  <div class="cell" style="width:68px"></div>
  <div class="cell" style="width:29px;padding-left:6px"><svg width="18" height="20" viewBox="0 0 18 20"><path d="M1 5.500h5M1 14.500h5M3.500 5v10M9.500 12v2.500h6V12" fill="none" stroke="#5f5f5f"/></svg></div>
  <div class="cell" style="width:29px;padding-left:9px"><svg width="12" height="20" viewBox="0 0 12 20"><path d="M.5 6h11v8H.5z" fill="#8f8f8f"/><path d="M6 5v5M3 8.500l3 3 3-3" fill="none" stroke="#222" stroke-width="1.600"/></svg></div>
  <div class="cell" style="width:378px"></div>
  <div class="cell" style="width:76px;padding-left:12px"><svg width="56" height="20" viewBox="0 0 56 20"><path d="M.5 6.500h5l2.500 3v6H.5z" fill="none" stroke="#a34a10"/><path d="M14.500 6.500h5l2.500 3v6h-7.500zM24.500 6.500h5l2.500 3v6h-7.500zM46.500 6.500h4l3.500 3v6h-7.500h-7.500v-6l3.500-3zv9" fill="none" stroke="#636363"/></svg></div>
  <div class="cell" style="width:143px;padding-left:8px"><svg width="130" height="20" viewBox="0 0 130 20"><path d="M1.500 11h9M117.500 11h9M122 6.500v9" stroke="#777"/><path d="M16 10.500h97" stroke="#676767" stroke-width="2"/><path d="M53 8v5" stroke="#777" stroke-width="1.500"/><circle cx="64" cy="11" r="4.800" fill="#a5a5a5"/></svg></div>
  <div class="cell border-0 px-2"><span class="fit" data-w="30">100%</span></div>
</footer>

<div class="dock d-flex flex-shrink-0">
  <svg class="dockbg" width="1920" height="35"><defs><linearGradient id="db" x2="1" y2="0"><stop stop-color="#203a41"/><stop offset=".5" stop-color="#213f42"/><stop offset="1" stop-color="#214743"/></linearGradient><linearGradient id="bb"><stop stop-color="#593717"/><stop offset="1" stop-color="#664523"/></linearGradient>
  <pattern id="web" x="328" width="271" height="35" patternUnits="userSpaceOnUse"><path d="M0 17L-18 40M0 17l-55-18M0 17l70 25M0 17L36-5M0 17L-5-5M0 17l5 22M116-5l8 45M146 40l45-45M211-5l60 22M271 17l-25 22M266-5l5 22" stroke="#334e51" stroke-width="1.300" fill="none"/></pattern></defs>
  <path d="M0 0h1920v35H0z" fill="url(#db)"/><path d="M290 0h1630v35H290z" fill="url(#web)"/><path d="M0 0h326l-31 35H0z" fill="url(#bb)"/></svg>
  <div class="dk act d-flex justify-content-center"><svg width="16" height="16" viewBox="0 0 16 16"><path d="M1.500.500h10l3 3v12h-13z" fill="#0c5e90"/><path d="M3.500 2.500h7l2 2v9h-9z" fill="#fff"/><path d="M5 5h4M5 7.300h6M5 9.500h6M5 11.700h5" stroke="#0c6ea8" stroke-width="1.200"/></svg><div class="dots d-flex justify-content-center"><i></i><i></i><i></i><i></i></div></div>
  <div class="dk d-flex justify-content-center"><svg width="16" height="16" viewBox="0 0 16 16"><path d="M2 4C.5 6 0 8 .5 10a7.500 7.500 0 0015-1C15.500 6 14 3 11 .5c0 2-1 2.500-2 3.500-2-1-4-.5-5 .5C3 4 2.500 3 2 4z" fill="#f6373f"/><path d="M11 .5c3 2 4.800 5 4.500 8.500-.5 3-3 6.500-7.500 6.500 4-1 5-5 3-8-1-1.500-1-5 0-7z" fill="#ffc42d"/><circle cx="8" cy="8.500" r="3.300" fill="#7547e0"/><path d="M1 8c3-3 5-1 7 0-2 .5-2 1.500-3 2-1 2 2 3.500 5 3-5 3-9 0-9-5z" fill="#ff9131"/></svg><div class="dots d-flex justify-content-center"><i></i></div></div>
  <div class="dk d-flex justify-content-center"><svg width="16" height="16" viewBox="0 0 16 16"><rect x="1.500" y=".5" width="13" height="15" rx="1.500" fill="#f1f1f1"/><path d="M4 4h8M4 7h8M4 10h6" stroke="#ccc" stroke-width=".7"/><path d="M13 3L5 11" stroke="#3465d8" stroke-width="3"/><path d="M4 12l1-3 2 2z" fill="#333"/></svg><div class="dots d-flex justify-content-center"><i></i></div></div>
  <div class="dk d-flex justify-content-center"><svg width="16" height="16" viewBox="0 0 16 16"><rect x="1" y="1" width="14" height="14" rx="1.500" fill="#938c7b"/><path d="M3 3.500h4.500l1 1H13v8.500H3z" fill="#f4f3ee"/></svg><div class="dots d-flex justify-content-center"><i></i></div></div>
  <div class="dk d-flex justify-content-center"><svg width="16" height="16" viewBox="0 0 16 16"><path d="M1 1h7v14H1z" fill="#454545"/><path d="M8 1h7v14H8z" fill="#fdbb2d"/><path d="M2.500 5h4M4.500 3v4M2.500 11h4M9.500 7h4M9.500 9.500h4" stroke="#fff" stroke-width="1.200"/></svg><div class="dots d-flex justify-content-center"><i></i></div></div>
  <div class="dk d-flex justify-content-center"><svg width="16" height="16"><use href="#vlc"/></svg><div class="dots d-flex justify-content-center"><i></i><i></i></div></div>
  <div class="dk d-flex justify-content-center"><svg width="16" height="16" viewBox="0 0 16 16"><rect x=".5" y="1" width="15" height="14" rx="1.500" fill="#3a3d44" stroke="#24262a"/><path d="M1 8h4l1.500-2L8 11l1.500-4 1 1H15" fill="none" stroke="#82a5f0" stroke-width="1.200"/></svg><div class="dots d-flex justify-content-center"><i></i></div></div>
  <div class="dk d-flex justify-content-center"><svg width="16" height="16" viewBox="0 0 16 16"><path d="M0 1h11v6H0z" fill="#e9f2e1"/><path d="M0 6c4-1 8-1 11 1v8H0z" fill="#7ccb3c"/><circle cx="5" cy="7" r="2.800" fill="#3f9a2c"/><path d="M0 12c4-2 8-2 11-1v4H0z" fill="#4fae24"/><path d="M14.500 2l-4 11" stroke="#b8872d" stroke-width="1.500"/></svg><div class="dots d-flex justify-content-center"><i></i></div></div>
  <div class="dk d-flex justify-content-center"><svg width="16" height="16"><use href="#dc"/></svg></div>
  <div class="dk d-flex justify-content-center"><svg width="16" height="16" viewBox="0 0 16 16"><rect x=".5" y="1" width="15" height="14" rx="1" fill="#e5e2da"/><path d="M2.500 3h11v10h-11z" fill="#c7c2b6"/><circle cx="7.500" cy="7" r="3.300" fill="#eee" stroke="#444" stroke-width="1.200"/><path d="M10 9.500l3.500 3.500" stroke="#333" stroke-width="1.800"/></svg></div>
  <div class="dk d-flex justify-content-center"><svg width="16" height="16" viewBox="0 0 16 16"><path d="M3 2l8-1.500 4 10-9 2z" fill="#eef5f8"/><path d="M9 2c3 1 5 5 3 8l-4 .5z" fill="#2883b5"/><path d="M6 2l4-1c-2 3-2 6 0 9l-3 1z" fill="#fff"/><path d="M2 10l2 2.500 10-2 .5 2.500L4 15.500l-2-2z" fill="#ddd"/></svg></div>
  <div class="dk d-flex justify-content-center"><svg width="16" height="16" viewBox="0 0 16 16"><rect x=".8" y="1.300" width="14.400" height="13.400" rx="1.500" fill="#4b4b4b" stroke="#8b8b8b" stroke-width=".7"/><path d="M3 4l3 2-3 2M7 8.500h4" fill="none" stroke="#eee" stroke-width="1.200"/></svg><div class="dots d-flex justify-content-center"><i></i></div></div>
  <div class="dk d-flex justify-content-center"><svg width="16" height="16" viewBox="0 0 16 16"><path d="M8 1l6 2.500v6.500l-6 4.500L2 10V3.500z" fill="#163a66" stroke="#dde6ef" stroke-width="1.300"/><path d="M2 4l6 3 6-3M8 7v7.500" fill="none" stroke="#dde6ef" stroke-width="1.300"/></svg></div>
  <div class="dk d-flex justify-content-center"><svg width="16" height="16" viewBox="0 0 16 16"><circle cx="8" cy="8" r="7.700" fill="#123a72"/><path d="M1 11l5 3 8-1a7.700 7.700 0 01-13-2" fill="#1b8ac2"/><circle cx="11" cy="5.500" r="3" fill="none" stroke="#fff" stroke-width="1.500"/><circle cx="11" cy="5.500" r="1.200" fill="#ccc"/><path d="M0 8l5 3 4-3" fill="none" stroke="#fff" stroke-width="2.600"/><circle cx="5.500" cy="11" r="2.200" fill="#fff"/></svg></div>
  <div class="dk d-flex justify-content-center"><svg width="12" height="16" viewBox="0 0 12 16" shape-rendering="crispEdges"><path d="M3 0h5v1h3v1H2V1h1zM4 8h4v4H3V9h1z" fill="#e1320f"/><path d="M3 2h6v1h2v2h-1v2H3zM0 10h2v2H0zM10 10h2v2h-2z" fill="#e89a2d"/><path d="M2 2h2v3H2zM1 7h3v3H1zM8 8h3v2H8zM0 14h4v2H0zM8 14h4v2H8z" fill="#8a5a11"/><path d="M2 11h8v1H9v2H7v-1H5v1H2z" fill="#e1320f"/></svg></div>
  <div class="dk d-flex justify-content-center"><svg width="16" height="16" viewBox="0 0 16 16"><rect x="1.500" y=".5" width="13" height="15" rx="1.500" fill="#f6f6f6"/><path d="M8 12.500C5 9 4 8 4 6c0-2.500 3-3 4-.8C9 3 12 3.500 12 6c0 2-1 3-4 6.500z" fill="#d51232"/></svg></div>
  <div class="dk d-flex justify-content-center"><svg width="16" height="16" viewBox="0 0 16 16"><rect x="1" y="1" width="14" height="14" rx="1" fill="#6fd9bd"/><path d="M1 1h14v5H1z" fill="#3fa08f"/><path d="M8 3l5 3v4l-5 2.500L3 10V6z" fill="#2f4246"/><path d="M8 11v3" stroke="#2f4246" stroke-width="1.500"/></svg></div>
  <div class="dk d-flex justify-content-center"><svg width="16" height="16" viewBox="0 0 16 16"><rect x="1" y="1" width="14" height="14" rx="1.500" fill="#f3f1ea"/><path d="M2 4.500h12M2 8h12M2 11.500h12M4.500 2v12M8 2v12M11.500 2v12" stroke="#777362"/></svg></div>
  <div class="dk d-flex justify-content-center"><svg width="16" height="16" viewBox="0 0 16 16"><rect x="1.500" y=".5" width="13" height="15" rx="1.500" fill="#eef1fa"/><path d="M3.500 3.500h9M5 6h6v3.500H5zM8 2v12M8 9.500l-4 4M8 9.500l4 4" fill="none" stroke="#5783ef" stroke-width="1.300"/></svg></div>
  <div class="dk d-flex justify-content-center"><svg width="16" height="16" viewBox="0 0 16 16"><circle cx="8" cy="8" r="7.200" fill="#cfcfcf"/><circle cx="8" cy="8" r="5" fill="none" stroke="#444" stroke-width="1.200"/><circle cx="8" cy="8" r="2.300" fill="none" stroke="#444" stroke-width="1.200"/></svg><div class="dots d-flex justify-content-center"><i></i></div></div>
  <div class="dk d-flex justify-content-center"><svg width="16" height="16" viewBox="0 0 16 16"><path d="M1 7l4-.5L8 7l4-3 1 5-3 3c-4 0-6-2-7-4z" fill="#766f61"/><circle cx="7.500" cy="6.500" r="1.500" fill="#eee"/><circle cx="10.500" cy="5.500" r="1.200" fill="#ddd"/><path d="M8 9l6 4" stroke="#8a5a30" stroke-width="1.300"/><path d="M0 7h3" stroke="#111" stroke-width="1.500"/></svg></div>
  <div class="dk d-flex justify-content-center"><svg width="16" height="16" viewBox="0 0 16 16"><rect x=".5" y="1.500" width="15" height="13" rx="1.500" fill="#e9e8ea"/><circle cx="8" cy="8" r="4.500" fill="#777"/><circle cx="8" cy="8" r="3" fill="#7b6fd4"/><circle cx="13.500" cy="3.500" r=".8" fill="#e33"/></svg></div>
  <div class="dk d-flex justify-content-center"><svg width="17" height="16" viewBox="0 0 17 16"><path d="M2.500 9C2 4 5 1.500 8.500 1.500S15 4 14.500 9" fill="none" stroke="#1313c4" stroke-width="1.800"/><circle cx="8.500" cy="9.500" r="4.300" fill="#f5a623"/><path d="M5 9.500l2-1.500 1.500 2 2-2 2 1.500" stroke="#d11" stroke-width="1.500" fill="none"/><path d="M.5 8h3.500v6H.5zM13 8h3.500v6H13z" fill="#0c0ca4"/></svg></div>
  <div class="dk d-flex justify-content-center"><svg width="16" height="16" viewBox="0 0 16 16"><path d="M1.500.500h10l3 3v12h-13z" fill="#118a11"/><path d="M3 2h8l2 2v10H3z" fill="#fff"/><path d="M4.500 5.500h7v6.500h-7zM4.500 7.700h7M4.500 9.900h7M8 5.500V12" fill="none" stroke="#118a11" stroke-width="1.200"/></svg><div class="dots d-flex justify-content-center"><i></i></div></div>
  <div class="dk d-flex justify-content-center"><svg width="16" height="16" viewBox="0 0 16 16"><path d="M1.500.500h10l3 3v12h-13z" fill="#c96c0b"/><path d="M3 2h8l2 2v10H3z" fill="#fff"/><circle cx="7" cy="8" r="2.800" fill="#e07b18"/><path d="M6 12.500h6v-6z" fill="#f5c13d" stroke="#7b3e07"/></svg></div>
  <div class="dk d-flex justify-content-center"><svg width="16" height="16" viewBox="0 0 16 16"><path d="M5 4c0-4 6-4 6 0" fill="none" stroke="#d7c3b6" stroke-width="1.300"/><rect x="1" y="3" width="14" height="12" rx="1" fill="#f0622d"/><path d="M5 12.500L8 5.500l3 7M5.500 10.500h5" fill="none" stroke="#fff" stroke-width="1.400"/></svg></div>
  <div class="dk d-flex justify-content-center"><svg width="16" height="16" viewBox="0 0 16 16"><path d="M1.500.500h10l3 3v12h-13z" fill="#b5450f"/><path d="M3 2h8l2 2v10H3z" fill="#fff"/><path d="M4.500 5.500h7v6h-7zM8 6v5M5 8.500h6" fill="none" stroke="#8b3008" stroke-width="1.400"/></svg></div>
  <div class="dk d-flex justify-content-center"><svg width="16" height="16"><use href="#dell"/></svg></div>
  <div class="dk d-flex justify-content-center"><svg width="16" height="16" viewBox="0 0 16 16"><rect x="1" y="1" width="14" height="14" rx="1" fill="#fff"/><path d="M3 3.500h10v8H3z" fill="#1a84c7"/><path d="M8 9v2.500M10 6v5.500" stroke="#0a3c69"/></svg></div>
  <div class="dk d-flex justify-content-center"><svg width="16" height="16" viewBox="0 0 16 16"><rect x="2" y=".5" width="12.500" height="15" rx="1" fill="#6b92f4"/><path d="M4 4l1 1 2-2M4 8.500l1 1 2-2M8.500 4.500h4M8.500 9h4M4 13h2" fill="none" stroke="#d5e0ff"/></svg></div>
  <div class="dk d-flex justify-content-center"><svg width="16" height="16" viewBox="0 0 16 16"><rect x=".8" y="1" width="14" height="14" rx="1" fill="#47494a"/><path d="M7 8h2c0-3 3-3 3 0h3v7H7v-2c2.500 0 2.500-2.500 0-2.500z" fill="#78c93c"/></svg></div>
  <div class="dk d-flex justify-content-center"><svg width="16" height="16" viewBox="0 0 16 16"><circle cx="7.500" cy="8" r="7.300" fill="#e8912d"/><circle cx="8.700" cy="8" r="7.200" fill="#2a2357"/><path d="M2 6h14M1.500 8h14.500M2 10h14" stroke="#cfcfe0" stroke-width="1.100"/></svg></div>
  <div class="dk d-flex justify-content-center"><svg width="16" height="16" viewBox="0 0 16 16"><path d="M0 1h6v2H5v6l5-6H9V1h6v2L6 15H3V3H0z" fill="#b9b9b9" stroke="#565656" stroke-width=".6"/><text x="7" y="14.500" font-family="Noto Sans" font-size="7.500" fill="#ddd">im</text></svg></div>
  <div class="dk d-flex justify-content-center"><svg width="16" height="16" viewBox="0 0 16 16"><rect x=".8" y="2" width="14.400" height="12" rx="1" fill="#f5f5f5"/><path d="M1.500 10h2l2-5 2 6 2-6 2 5 3-2" fill="none" stroke="#d91e3b" stroke-width="1.200"/><path d="M2 6h3l2 3 3-1 2-3 2 5" fill="none" stroke="#4aa0cc"/></svg></div>
  <div class="dk d-flex justify-content-center"><svg width="16" height="16" viewBox="0 0 16 16"><rect x="2" y="2" width="12.500" height="12.500" rx="1" fill="#f4f4f4"/><circle cx="8.200" cy="8.200" r="3.300" fill="#ddd" stroke="#aaa"/><circle cx="8.200" cy="8.200" r="1" fill="#888"/></svg></div>
  <div class="dk d-flex justify-content-center" style="color:#555"><svg width="16" height="16"><use href="#acirc"/></svg></div>
  <div class="dk d-flex justify-content-center" style="color:#5b1f4b"><svg width="16" height="16"><use href="#acirc"/></svg></div>
  <div class="dk d-flex justify-content-center"><svg width="16" height="16" viewBox="0 0 16 16"><rect x="1" y="1" width="14" height="14" rx="1" fill="#42b3a9"/><text x="2.500" y="12" font-family="Noto Sans" font-size="10" fill="#e2fbf7" textLength="11">28</text></svg></div>
  <div class="dk d-flex justify-content-center"><svg width="16" height="16"><use href="#dc"/></svg></div>
  <div class="dk d-flex justify-content-center"><svg width="16" height="16" viewBox="0 0 16 16"><rect x="1" y="2" width="14" height="12.500" fill="#178a4c" stroke="#6cc494" stroke-width=".7"/><path d="M6 3v10M10 3v10M3 6h10M3 10h10" stroke="#e0c23a"/><path d="M5 5h6v6H5z" fill="#3b3b35"/></svg></div>
  <div class="dk d-flex justify-content-center"><svg width="16" height="16" viewBox="0 0 16 16"><circle cx="8" cy="8" r="6.500" fill="#f4f4f4"/><circle cx="8" cy="8" r="4.300" fill="none" stroke="#2a9d8f" stroke-width="1.300"/><path d="M5.500 10.500V6l5 4.500V6" fill="none" stroke="#3878d0" stroke-width="1.100"/></svg></div>
  <div class="dk d-flex justify-content-center"><svg width="16" height="16" viewBox="0 0 16 16"><rect x="1" y="3" width="14" height="10" rx="1" fill="#dedede"/><path d="M3 5.500h10.500M3 8h10.500M5 10.500h6" stroke="#888" stroke-dasharray="1.200 .8"/></svg></div>
  <div class="dk d-flex justify-content-center"><svg width="16" height="16"><use href="#dell"/></svg></div>
  <div class="dk d-flex justify-content-center"><svg width="16" height="16" viewBox="0 0 16 16"><circle cx="8" cy="8" r="6.500" fill="#b5b5b5" stroke="#f1f1f1" stroke-width="1.400"/><path d="M4 6.500h3M9 6.500h3" stroke="#d3283c" stroke-width="1.800"/><path d="M8 8v4" stroke="#555" stroke-width="1.800"/></svg></div>
  <div class="dk d-flex justify-content-center"><svg width="16" height="16"><use href="#dc"/></svg></div>
  <div class="dk d-flex justify-content-center"><svg width="16" height="16" viewBox="0 0 16 16"><path d="M8 1l7 7-3 2 1 2-3 .5-2 2-3-2 1-1.500-5-2z" fill="#0a0a0c"/><path d="M8 1l3 3.500-1.500.5L8 4 6 5.500 4.500 4.700z" fill="#e8e8ee"/></svg></div>
  <div class="dk d-flex justify-content-center"><svg width="17" height="16" viewBox="0 0 17 16"><path d="M1 12l8-7H4V3.500h5L7 2l1.500-1 7 6-2 7-7-1V10l-4 3z" fill="#e87d0d"/><circle cx="11" cy="9.500" r="4.800" fill="#e87d0d"/><circle cx="11" cy="9.500" r="3" fill="#fff"/><circle cx="11" cy="9.500" r="1.700" fill="#265787"/></svg></div>
  <div class="dk d-flex justify-content-center"><svg width="16" height="16" viewBox="0 0 16 16"><path d="M3 4.500h10M3 8.500h10M3 12.500h10" transform="translate(0 -.5)" stroke="#eee" stroke-width="2" stroke-dasharray="2 2"/></svg></div>
</div>

<div class="msg d-flex flex-column" role="alertdialog">
  <div class="bodyrow d-flex flex-shrink-0">
    <svg width="48" height="48" viewBox="0 0 48 48" style="margin-top:25px"><circle cx="24" cy="24" r="22.700" fill="none" stroke="#fff" stroke-width="2.600"/><path d="M13 13l22 22M35 13L13 35" stroke="#fff" stroke-width="2.800"/></svg>
    <div class="lines"><div><span class="fit" data-w="431">Error saving the document Mila_V2_September18th2020Evening:</span></div><div><span class="fit" data-w="93">General Error.</span></div><div><span class="fit" data-w="183">General input/output error.</span></div></div>
  </div>
  <button class="okbtn btn p-0" type="button"><span class="fit" data-w="20">OK</span></button>
</div>

<script>
// Spread each label's letters so that it fills its nominal width.
document.querySelectorAll('.fit').forEach(function (el) {
  var n = el.textContent.length, w = el.getBoundingClientRect().width;
  el.style.letterSpacing = ((el.dataset.w - w) / n).toFixed(3) + 'px';
});
</script>
</body>
</html>
